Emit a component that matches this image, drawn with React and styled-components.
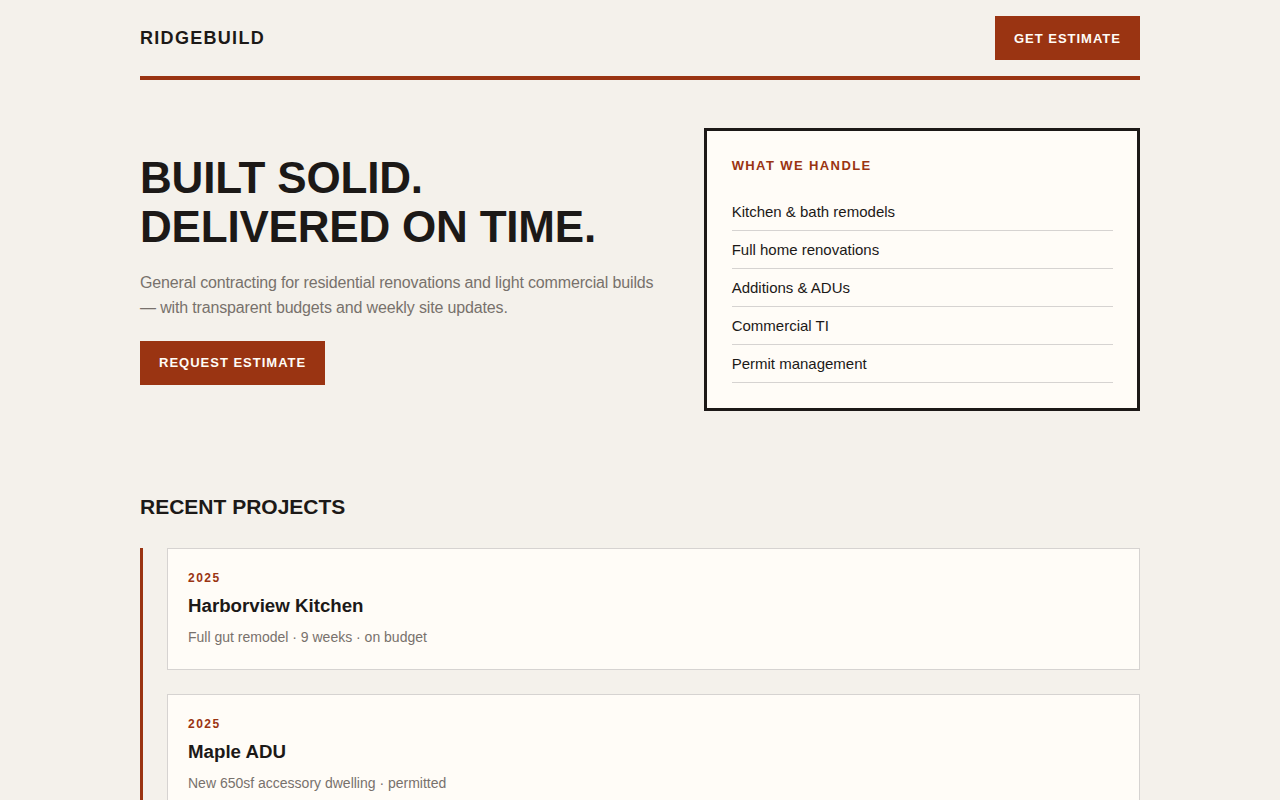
import styled, { createGlobalStyle } from 'styled-components'

const GlobalStyle = createGlobalStyle`
  * {
    box-sizing: border-box;
  }
  body {
    margin: 0;
    background-color: #f4f1eb;
    color: #1c1917;
    font-family: 'Liberation Sans', Arial, sans-serif;
  }
`

const Page = styled.div`
  width: 1000px;
  margin: 0 auto;
`

const Header = styled.header`
  display: flex;
  align-items: center;
  justify-content: space-between;
  padding: 16px 0;
  border-bottom: 4px solid #9a3412;
`

const Logo = styled.div`
  font-size: 18px;
  font-weight: 700;
  letter-spacing: 1.3px;
`

const Button = styled.button`
  height: 44px;
  padding: 0 19px;
  border: none;
  background-color: #9a3412;
  color: #fffcf7;
  font-family: inherit;
  font-size: 13px;
  font-weight: 700;
  letter-spacing: 1px;
  cursor: pointer;
`

const Hero = styled.section`
  display: grid;
  grid-template-columns: 1.2fr 1fr;
  gap: 40px;
  align-items: center;
  padding-top: 48px;
`

const HeroText = styled.div`
  display: flex;
  flex-direction: column;
  align-items: flex-start;
  padding-bottom: 2px;
`

const Title = styled.h1`
  margin: 0 0 19px;
  font-size: 44px;
  line-height: 49px;
  font-weight: 700;
  letter-spacing: -0.2px;
`

const Lead = styled.p`
  margin: 0 0 21px;
  font-size: 16px;
  line-height: 25px;
  letter-spacing: -0.15px;
  color: #78716c;
`

const Panel = styled.div`
  border: 3px solid #1c1917;
  background-color: #fffcf7;
  padding: 25px 24px 25px 25px;
`

const PanelLabel = styled.h3`
  margin: 0 0 17px;
  font-size: 13px;
  line-height: 20px;
  font-weight: 700;
  letter-spacing: 1.4px;
  color: #9a3412;
`

const List = styled.ul`
  margin: 0;
  padding: 0;
  list-style: none;
`

const Item = styled.li`
  padding: 10px 0;
  font-size: 15px;
  line-height: 17px;
  border-bottom: 1px solid #d6d3d1;
`

const Projects = styled.section`
  padding-top: 83px;
`

const SectionTitle = styled.h2`
  margin: 0 0 28px;
  font-size: 21px;
  line-height: 26px;
  font-weight: 700;
`

const Timeline = styled.div`
  display: flex;
  flex-direction: column;
  gap: 24px;
  padding-left: 24px;
  border-left: 3px solid #9a3412;
`

const Card = styled.article`
  padding: 21px 20px 22px;
  background-color: #fffcf7;
  border: 1px solid #d6d3d1;
`

const Year = styled.div`
  font-size: 12px;
  line-height: 16px;
  font-weight: 700;
  letter-spacing: 1.5px;
  color: #9a3412;
`

const CardTitle = styled.h4`
  margin: 8px 0 9px;
  font-size: 18.7px;
  line-height: 24px;
  font-weight: 700;
`

const Meta = styled.div`
  font-size: 14px;
  line-height: 20px;
  color: #78716c;
`

const services = [
  'Kitchen & bath remodels',
  'Full home renovations',
  'Additions & ADUs',
  'Commercial TI',
  'Permit management'
]

const projects = [
  { year: '2025', title: 'Harborview Kitchen', meta: 'Full gut remodel · 9 weeks · on budget' },
  { year: '2025', title: 'Maple ADU', meta: 'New 650sf accessory dwelling · permitted' }
]

export default function App() {
  return (
    <>
      <GlobalStyle />
      <Page>
        <Header>
          <Logo>RIDGEBUILD</Logo>
          <Button>GET ESTIMATE</Button>
        </Header>

        <Hero>
          <HeroText>
            <Title>
              BUILT SOLID.
              <br />
              DELIVERED ON TIME.
            </Title>
            <Lead>
              General contracting for residential renovations and light commercial builds — with transparent
              budgets and weekly site updates.
            </Lead>
            <Button>REQUEST ESTIMATE</Button>
          </HeroText>
          <Panel>
            <PanelLabel>WHAT WE HANDLE</PanelLabel>
            <List>
              {services.map((s) => (
                <Item key={s}>{s}</Item>
              ))}
            </List>
          </Panel>
        </Hero>

        <Projects>
          <SectionTitle>RECENT PROJECTS</SectionTitle>
          <Timeline>
            {projects.map((p) => (
              <Card key={p.title}>
                <Year>{p.year}</Year>
                <CardTitle>{p.title}</CardTitle>
                <Meta>{p.meta}</Meta>
              </Card>
            ))}
          </Timeline>
        </Projects>
      </Page>
    </>
  )
}
